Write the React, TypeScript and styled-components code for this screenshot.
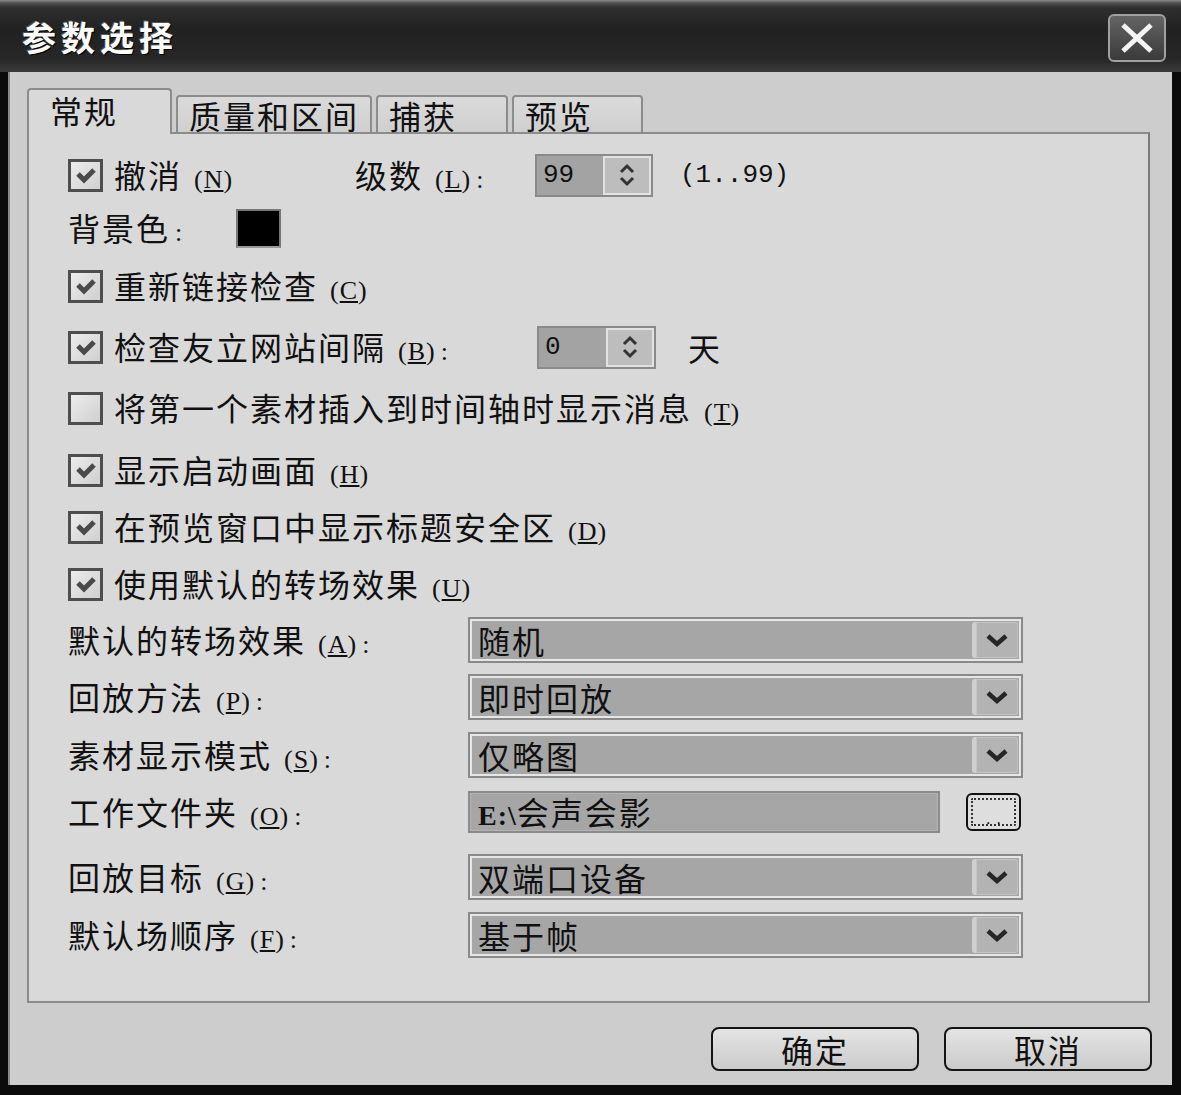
import React from 'react';
import styled, { createGlobalStyle } from 'styled-components';

const GlobalStyle = createGlobalStyle`
  html, body { margin: 0; padding: 0; background: #000; }
  body { font-family: "Noto Sans CJK SC", "Noto Sans", sans-serif; color: #111; }
  * { box-sizing: border-box; }
`;

const Window = styled.div`
  width: 1181px;
  height: 1095px;
  background: #0b0b0b;
  display: flex;
  flex-direction: column;
  overflow: hidden;
`;

const TitleBar = styled.div`
  height: 72px;
  flex: none;
  display: flex;
  align-items: center;
  justify-content: space-between;
  padding: 8px 15px 0 22px;
  background: linear-gradient(
    to bottom,
    #8a8a8a 0px,
    #505050 3px,
    #2e2e2e 8px,
    #222 40%,
    #262626 80%,
    #3a3a3a 100%
  );
`;

const Title = styled.h1`
  margin: 0 0 6px 0;
  font-size: 34px;
  font-weight: 700;
  color: #fff;
  letter-spacing: 5px;
  line-height: 1;
  text-shadow: 1px 1px 0 #000, -1px -1px 0 #555;
`;

const CloseButton = styled.button`
  width: 58px;
  height: 48px;
  margin-bottom: 4px;
  border: 2px solid #a0a0a0;
  border-radius: 6px;
  background: linear-gradient(#646464, #3a3a3a);
  display: flex;
  align-items: center;
  justify-content: center;
  padding: 0;
`;

const Body = styled.div`
  flex: 1;
  margin: 0 9px 10px 8px;
  background: #cdcdcd;
  border-left: 2px solid #8a8a8a;
  padding: 16px 22px 14px 17px;
  display: flex;
  flex-direction: column;
`;

const TabStrip = styled.div`
  display: flex;
  align-items: flex-end;
  gap: 4px;
  height: 46px;
  margin-bottom: -2px;
  position: relative;
  z-index: 1;
`;

const Tab = styled.div<{ $w: number; $active?: boolean }>`
  width: ${(p) => p.$w}px;
  height: ${(p) => (p.$active ? 46 : 39)}px;
  border: 2px solid #8c8c8c;
  border-bottom: ${(p) => (p.$active ? 'none' : '2px solid #8c8c8c')};
  border-radius: 4px 4px 0 0;
  background: ${(p) => (p.$active ? '#d9d9d9' : 'linear-gradient(#dadada, #cfcfcf)')};
  display: flex;
  align-items: ${(p) => (p.$active ? 'flex-start' : 'center')};
  padding: ${(p) => (p.$active ? '4px 0 0 21px' : '0 0 0 11px')};
  font-size: 32px;
  letter-spacing: 2px;
  line-height: 1;
  white-space: nowrap;
`;

const Panel = styled.div`
  flex: 1;
  background: #d9d9d9;
  border: 2px solid #8c8c8c;
  border-right-color: #7a7a7a;
  padding: 19px 0 0 39px;
  display: flex;
  flex-direction: column;
`;

const Row = styled.div<{ $mt?: number }>`
  height: 44px;
  flex: none;
  margin-top: ${(p) => p.$mt ?? 0}px;
  display: flex;
  align-items: center;
`;

const Text = styled.span<{ $w?: number; $ml?: number }>`
  font-size: 32px;
  letter-spacing: 2px;
  line-height: 1;
  white-space: nowrap;
  flex: none;
  display: inline-flex;
  align-items: baseline;
  margin-left: ${(p) => p.$ml ?? 0}px;
  ${(p) => (p.$w ? `width: ${p.$w}px;` : '')}
`;

const Key = styled.span`
  font-family: "Liberation Serif", serif;
  font-size: 26px;
  letter-spacing: 1px;
  margin-left: 12px;
`;

const Colon = styled.span`
  font-family: "Liberation Serif", serif;
  font-size: 26px;
  margin-left: 5px;
`;

const CheckField = styled.label<{ $w?: number }>`
  display: flex;
  align-items: center;
  flex: none;
  ${(p) => (p.$w ? `width: ${p.$w}px;` : '')}
`;

const Box = styled.span`
  width: 35px;
  height: 33px;
  flex: none;
  margin-right: 11px;
  border: 3px solid #4e4e4e;
  background: linear-gradient(135deg, #ececec, #d0d0d0);
  display: flex;
  align-items: center;
  justify-content: center;
`;

const Spinner = styled.div<{ $w: number }>`
  width: ${(p) => p.$w}px;
  height: 43px;
  flex: none;
  border: 2px solid #8a8a8a;
  background: #a3a3a3;
  display: flex;
`;

const SpinValue = styled.span`
  flex: 1;
  font-family: "Liberation Mono", monospace;
  font-size: 26px;
  line-height: 39px;
  padding-left: 6px;
`;

const SpinButtons = styled.span`
  width: 48px;
  flex: none;
  background: #bdbdbd;
  border: 2px solid #e2e2e2;
  display: flex;
  align-items: center;
  justify-content: center;
`;

const Mono = styled.span<{ $ml: number }>`
  font-family: "Liberation Mono", monospace;
  font-size: 26px;
  margin-left: ${(p) => p.$ml}px;
  white-space: nowrap;
`;

const Swatch = styled.span`
  width: 45px;
  height: 39px;
  flex: none;
  background: #000;
  border: 2px solid #777;
  border-bottom-color: #9a9a9a;
`;

const SelectBox = styled.div<{ $w: number; $plain?: boolean }>`
  width: ${(p) => p.$w}px;
  height: ${(p) => (p.$plain ? 42 : 46)}px;
  flex: none;
  border: 2px solid #8a8a8a;
  background: #a6a6a6;
  box-shadow: inset 0 0 0 ${(p) => (p.$plain ? 1 : 2)}px ${(p) => (p.$plain ? '#b4b4b4' : '#e6e6e6')};
  padding: 3px 3px 3px 8px;
  display: flex;
  align-items: center;
`;

const SelectValue = styled.span`
  flex: 1;
  font-size: 32px;
  letter-spacing: 2px;
  line-height: 1;
  white-space: nowrap;
`;

const DropButton = styled.span`
  width: 46px;
  align-self: stretch;
  flex: none;
  margin-left: 4px;
  border-left: 4px solid #cfcfcf;
  border-radius: 3px;
  background: #b3b3b3;
  box-shadow: inset 0 0 0 1px #c4c4c4;
  display: flex;
  align-items: center;
  justify-content: center;
`;

const Latin = styled.span`
  font-family: "Liberation Serif", serif;
  font-weight: 700;
  font-size: 28px;
  letter-spacing: 1px;
`;

const BrowseButton = styled.button`
  width: 55px;
  height: 38px;
  margin-left: 26px;
  flex: none;
  border: 2px solid #111;
  border-radius: 6px;
  background: #dedede;
  padding: 3px;
  display: flex;
`;

const FocusRect = styled.span`
  flex: 1;
  border: 2px dotted #333;
  border-radius: 2px;
  display: flex;
  align-items: flex-end;
  justify-content: center;
  font-family: "Liberation Sans", sans-serif;
  font-size: 16px;
  line-height: 10px;
  letter-spacing: 6px;
  padding-left: 6px;
`;

const ButtonRow = styled.div`
  display: flex;
  justify-content: flex-end;
  gap: 25px;
  margin-top: 24px;
  margin-right: -2px;
`;

const DialogButton = styled.button`
  width: 208px;
  height: 44px;
  border: 2px solid #151515;
  border-radius: 8px;
  background: linear-gradient(#e4e4e4, #cbcbcb);
  font-family: "Noto Sans CJK SC", sans-serif;
  font-size: 32px;
  letter-spacing: 2px;
  line-height: 1;
  color: #111;
  padding: 0;
  display: flex;
  align-items: center;
  justify-content: center;
`;

const CheckMark = () => (
  <svg width="24" height="20" viewBox="0 0 24 20">
    <path d="M4 9 L10 15 L20 5" fill="none" stroke="#4a4a4a" strokeWidth="5" strokeLinejoin="miter" />
  </svg>
);

const Chevron = () => (
  <svg width="26" height="16" viewBox="0 0 26 16">
    <path d="M4 4 L13 12 L22 4" fill="none" stroke="#262626" strokeWidth="4.5" />
  </svg>
);

const UpDown = () => (
  <svg width="20" height="30" viewBox="0 0 20 30">
    <path d="M4 12 L10 6 L16 12" fill="none" stroke="#333" strokeWidth="3" />
    <path d="M4 18 L10 24 L16 18" fill="none" stroke="#333" strokeWidth="3" />
  </svg>
);

const CloseIcon = () => (
  <svg width="36" height="32" viewBox="0 0 36 32">
    <path d="M4 3 L32 29 M32 3 L4 29" stroke="#f4f4f4" strokeWidth="5" strokeLinecap="butt" />
  </svg>
);

const Mn = ({ k }: { k: string }) => (
  <Key>
    (<u>{k}</u>)
  </Key>
);

const Check = ({ checked = true, label, k, colon, w }: { checked?: boolean; label: string; k: string; colon?: boolean; w?: number }) => (
  <CheckField $w={w}>
    <Box>{checked && <CheckMark />}</Box>
    <Text>
      {label}
      <Mn k={k} />
      {colon && <Colon>:</Colon>}
    </Text>
  </CheckField>
);

const Field = ({ label, k }: { label: string; k: string }) => (
  <Text $w={400}>
    {label}
    <Mn k={k} />
    <Colon>:</Colon>
  </Text>
);

const Select = ({ value }: { value: string }) => (
  <SelectBox $w={555}>
    <SelectValue>{value}</SelectValue>
    <DropButton>
      <Chevron />
    </DropButton>
  </SelectBox>
);

export default function App() {
  return (
    <>
      <GlobalStyle />
      <Window>
        <TitleBar>
          <Title>参数选择</Title>
          <CloseButton aria-label="关闭">
            <CloseIcon />
          </CloseButton>
        </TitleBar>
        <Body>
          <TabStrip>
            <Tab $w={145} $active>常规</Tab>
            <Tab $w={196}>质量和区间</Tab>
            <Tab $w={132}>捕获</Tab>
            <Tab $w={131}>预览</Tab>
          </TabStrip>
          <Panel>
            <Row>
              <Check label="撤消" k="N" w={287} />
              <Text $w={180}>
                级数
                <Mn k="L" />
                <Colon>:</Colon>
              </Text>
              <Spinner $w={118}>
                <SpinValue>99</SpinValue>
                <SpinButtons>
                  <UpDown />
                </SpinButtons>
              </Spinner>
              <Mono $ml={27}>(1..99)</Mono>
            </Row>
            <Row $mt={9}>
              <Text $w={168}>
                背景色<Colon>:</Colon>
              </Text>
              <Swatch />
            </Row>
            <Row $mt={14}>
              <Check label="重新链接检查" k="C" />
            </Row>
            <Row $mt={17}>
              <Check label="检查友立网站间隔" k="B" colon w={469} />
              <Spinner $w={119}>
                <SpinValue>0</SpinValue>
                <SpinButtons>
                  <UpDown />
                </SpinButtons>
              </Spinner>
              <Text $ml={32}>天</Text>
            </Row>
            <Row $mt={17}>
              <Check checked={false} label="将第一个素材插入到时间轴时显示消息" k="T" />
            </Row>
            <Row $mt={18}>
              <Check label="显示启动画面" k="H" />
            </Row>
            <Row $mt={13}>
              <Check label="在预览窗口中显示标题安全区" k="D" />
            </Row>
            <Row $mt={13}>
              <Check label="使用默认的转场效果" k="U" />
            </Row>
            <Row $mt={12}>
              <Field label="默认的转场效果" k="A" />
              <Select value="随机" />
            </Row>
            <Row $mt={13}>
              <Field label="回放方法" k="P" />
              <Select value="即时回放" />
            </Row>
            <Row $mt={14}>
              <Field label="素材显示模式" k="S" />
              <Select value="仅略图" />
            </Row>
            <Row $mt={13}>
              <Field label="工作文件夹" k="O" />
              <SelectBox $w={472} $plain>
                <SelectValue>
                  <Latin>{'E:\\'}</Latin>会声会影
                </SelectValue>
              </SelectBox>
              <BrowseButton aria-label="浏览">
                <FocusRect>..</FocusRect>
              </BrowseButton>
            </Row>
            <Row $mt={21}>
              <Field label="回放目标" k="G" />
              <Select value="双端口设备" />
            </Row>
            <Row $mt={14}>
              <Field label="默认场顺序" k="F" />
              <Select value="基于帧" />
            </Row>
          </Panel>
          <ButtonRow>
            <DialogButton>确定</DialogButton>
            <DialogButton>取消</DialogButton>
          </ButtonRow>
        </Body>
      </Window>
    </>
  );
}
